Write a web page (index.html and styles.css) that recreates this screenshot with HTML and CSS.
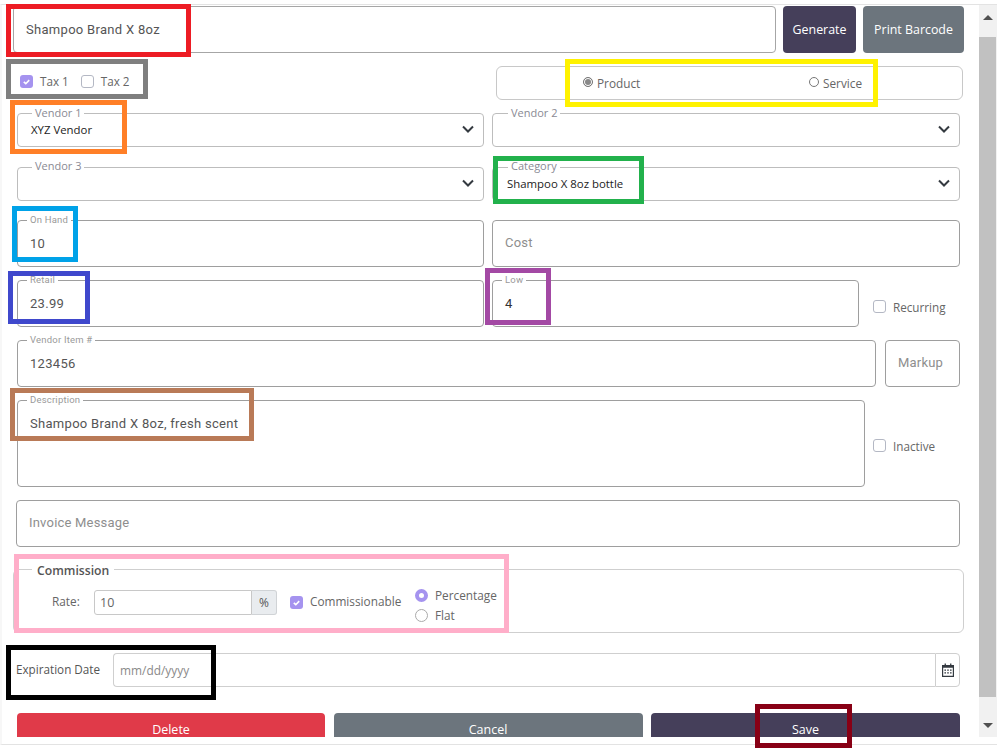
FILE: index.html
```html
<!DOCTYPE html>
<html lang="en">
<head>
<meta charset="utf-8">
<title>Product</title>
<link rel="stylesheet" href="styles.css">
</head>
<body>
<div class="frame">
  <main class="form">
    <div class="row row-name">
      <div class="field name-field"><span class="value roboto">Shampoo Brand X 8oz</span></div>
      <button class="btn btn-dark gen">Generate</button>
      <button class="btn btn-gray print">Print Barcode</button>
    </div>

    <div class="row row-type">
      <div class="taxes">
        <span class="check on"><svg viewBox="0 0 13 13"><path d="M3.8 6.8l2 1.9 3.4-3.6" fill="none" stroke="#fff" stroke-width="1.6"/></svg></span><span class="chk-label">Tax 1</span>
        <span class="check tax2"></span><span class="chk-label">Tax 2</span>
      </div>
      <div class="type-box">
        <span class="item product"><span class="dot sel"></span>Product</span>
        <span class="item service"><span class="dot"></span>Service</span>
      </div>
    </div>

    <div class="row row-select g13">
      <div class="field sel-field half"><label class="sel-label">Vendor 1</label><span class="sel-value">XYZ Vendor</span><svg class="chev" viewBox="0 0 12 8"><path d="M1 1.5l5 5 5-5" fill="none" stroke="#343a40" stroke-width="2"/></svg></div>
      <div class="field sel-field half"><label class="sel-label">Vendor 2</label><svg class="chev" viewBox="0 0 12 8"><path d="M1 1.5l5 5 5-5" fill="none" stroke="#343a40" stroke-width="2"/></svg></div>
    </div>

    <div class="row row-select g20">
      <div class="field sel-field half"><label class="sel-label">Vendor 3</label><svg class="chev" viewBox="0 0 12 8"><path d="M1 1.5l5 5 5-5" fill="none" stroke="#343a40" stroke-width="2"/></svg></div>
      <div class="field sel-field half"><label class="sel-label">Category</label><span class="sel-value">Shampoo X 8oz bottle</span><svg class="chev" viewBox="0 0 12 8"><path d="M1 1.5l5 5 5-5" fill="none" stroke="#343a40" stroke-width="2"/></svg></div>
    </div>

    <div class="row row-input g19">
      <div class="field half"><label class="mini">On Hand</label><span class="value roboto">10</span></div>
      <div class="field half"><span class="ph roboto">Cost</span></div>
    </div>

    <div class="row row-input g13">
      <div class="field half"><label class="mini">Retail</label><span class="value roboto">23.99</span></div>
      <div class="field low"><label class="mini">Low</label><span class="value roboto dark">4</span></div>
      <div class="side-check"><span class="check"></span><span class="chk-label">Recurring</span></div>
    </div>

    <div class="row row-input g13">
      <div class="field vendor-item"><label class="mini">Vendor Item #</label><span class="value roboto">123456</span></div>
      <div class="field markup"><span class="ph roboto">Markup</span></div>
    </div>

    <div class="row row-desc g13">
      <div class="field desc"><label class="mini">Description</label><span class="value roboto">Shampoo Brand X 8oz, fresh scent</span></div>
      <div class="side-check"><span class="check"></span><span class="chk-label">Inactive</span></div>
    </div>

    <div class="row row-input g13 invoice-row">
      <div class="field invoice"><span class="ph roboto">Invoice Message</span></div>
    </div>

    <section class="commission">
      <h3 class="legend">Commission</h3>
      <span class="rate-label">Rate:</span>
      <div class="rate-group"><span class="rate-input">10</span><span class="rate-addon">%</span></div>
      <span class="check on comm-check"><svg viewBox="0 0 13 13"><path d="M3.8 6.8l2 1.9 3.4-3.6" fill="none" stroke="#fff" stroke-width="1.6"/></svg></span><span class="comm-label">Commissionable</span>
      <div class="radios">
        <div class="radio-line"><span class="big-radio on"></span>Percentage</div>
        <div class="radio-line"><span class="big-radio"></span>Flat</div>
      </div>
    </section>

    <div class="row date-row">
      <span class="date-label">Expiration Date</span>
      <div class="date-input"><span class="date-ph">mm/dd/yyyy</span></div>
      <div class="date-addon"><svg viewBox="0 0 12 14" width="12" height="14"><path d="M.6 2.5h10.8v10.9H.6z" fill="none" stroke="#343a40" stroke-width="1.2"/><path d="M.6 2.2h10.8v2.6H.6zM2.6.4h1.3v2.4H2.6zM8.1.4h1.3v2.4H8.1z" fill="#343a40"/><path d="M2.4 6.4h1.6v1.4H2.4zM5.2 6.4h1.6v1.4H5.2zM8 6.4h1.6v1.4H8zM2.4 9.2h1.6v1.4H2.4zM5.2 9.2h1.6v1.4H5.2zM8 9.2h1.6v1.4H8z" fill="#343a40"/></svg></div>
    </div>

    <div class="row actions">
      <button class="act act-red">Delete</button>
      <button class="act act-gray">Cancel</button>
      <button class="act act-dark">Save</button>
    </div>
  </main>

  <aside class="scrollbar">
    <span class="arrow up"></span>
    <span class="thumb"></span>
    <span class="arrow down"></span>
  </aside>
</div>

<div class="mark m-red"></div>
<div class="mark m-gray"></div>
<div class="mark m-orange"></div>
<div class="mark m-yellow"></div>
<div class="mark m-green"></div>
<div class="mark m-cyan"></div>
<div class="mark m-blue"></div>
<div class="mark m-purple"></div>
<div class="mark m-brown"></div>
<div class="mark m-pink"></div>
<div class="mark m-black"></div>
<div class="mark m-maroon"></div>
</body>
</html>
```
FILE: styles.css
```css
* { box-sizing: border-box; }
html, body { margin: 0; height: 750px; overflow: hidden; background: #fff; }
body { font-family: "Open Sans", "Liberation Sans", sans-serif; color: #555; position: relative; }

.frame {
  margin-top: 4px;
  height: 741px;
  display: flex;
  border-top: 1px solid #e3e3e3;
  border-bottom: 1px solid #e3e3e3;
  border-left: 2px solid #f7f7f7;
}
.form { width: 977px; height: 732px; overflow: hidden; padding: 1px 19px 0 15px; }
.row { display: flex; }
.roboto { font-family: Roboto, "Liberation Sans", sans-serif; }

.field {
  position: relative;
  border: 1px solid #9e9e9e;
  border-radius: 4px;
  background: #fff;
  flex: none;
}
.half { width: 467px; }
.half + .half { margin-left: 8px; width: 468px; }

.row-name { height: 47px; margin-left: -4px; margin-right: -4px; }
.name-field { width: 763px; border-color: #a6a6a6; }
.value { position: absolute; left: 12px; top: 15px; font-size: 13px; line-height: 16px; color: #555; letter-spacing: .3px; white-space: nowrap; }
.value.dark { color: #333; }
.ph { position: absolute; left: 12px; top: 13px; font-size: 13px; line-height: 18px; color: #8e8e8e; letter-spacing: .2px; }

.btn { border: 0; border-radius: 4px; color: #fff; font: 12.4px/18px "Open Sans", sans-serif; padding: 0; height: 47px; }
.btn-dark { background: #453f5a; }
.btn-gray { background: #6c757d; }
.gen { width: 73px; margin-left: 7px; }
.print { width: 101px; margin-left: 7px; }

.row-type { height: 34px; margin-top: 13px; margin-right: -3px; justify-content: space-between; }
.taxes { display: flex; align-items: center; padding-left: 3px; height: 30px; }
.check {
  display: inline-block;
  width: 13px; height: 13px;
  border: 1px solid #b4b8c4;
  border-radius: 3px;
  background: #fff;
  flex: none;
}
.check svg { display: block; width: 13px; height: 13px; }
.check.on { background: #a593ef; border: 0; }
.tax2 { margin-left: 12px; }
.chk-label { margin-left: 7px; font-size: 11.7px; line-height: 16px; color: #666; }
.type-box {
  position: relative;
  width: 467px; height: 34px;
  border: 1px solid #c8c8c8;
  border-radius: 6px;
}
.item { position: absolute; top: 7px; display: flex; align-items: center; font-size: 11.8px; line-height: 18px; color: #666; }
.product { left: 86px; }
.service { left: 312px; }
.dot { width: 10px; height: 10px; border: 1px solid #777; border-radius: 50%; margin-right: 4px; background: #fff; position: relative; top: -1px; }
.dot.sel { background: #888; box-shadow: inset 0 0 0 1px #fff; }

.row-select { height: 34px; }
.g13 { margin-top: 13px; }
.g19 { margin-top: 19px; }
.g20 { margin-top: 20px; }
.sel-field { border-color: #bdbdbd; }
.sel-label {
  position: absolute; left: 14px; top: -8px;
  background: #fff; padding: 0 3px;
  font-size: 11px; line-height: 13px; color: #8a8a94;
}
.g20 .sel-label { top: -9px; }
.sel-value { position: absolute; left: 13px; top: 8px; font-size: 11.4px; line-height: 16px; color: #222; white-space: nowrap; }
.sel-field + .sel-field .sel-value { left: 14px; }
.sel-field + .sel-field .sel-label { left: 15px; }
.chev { position: absolute; right: 9px; top: 11px; width: 12px; height: 8px; }

.row-input { height: 47px; }
.mini {
  position: absolute; left: 9px; top: -7px;
  background: #fff; padding: 0 3px;
  font-family: Roboto, sans-serif; font-size: 9.5px; line-height: 12px; color: #9a9a9a; letter-spacing: .2px;
}
.low { width: 367px; margin-left: 8px; }
.side-check { display: flex; align-items: center; margin-left: 14px; padding-top: 6px; }
.vendor-item { width: 859px; }
.markup { width: 75px; margin-left: 9px; }
.row-desc { height: 87px; }
.desc { width: 848px; }
.row-desc .side-check { margin-left: 8px; padding-top: 4px; }
.invoice-row { margin-left: -1px; }
.invoice { width: 944px; }

.commission {
  position: relative;
  height: 64px;
  margin-top: 22px;
  margin-left: -4px;
  margin-right: -4px;
  border: 1px solid #cfcfcf;
  border-radius: 6px;
}
.legend {
  position: absolute; left: 18px; top: -7px; margin: 0;
  background: #fff; padding: 0 5px;
  font-size: 12.2px; line-height: 16px; font-weight: 600; color: #555;
}
.rate-label { position: absolute; left: 38px; top: 23px; font-size: 11.8px; line-height: 16px; color: #666; }
.rate-group { position: absolute; left: 80px; top: 20px; display: flex; height: 25px; }
.rate-input {
  width: 158px; border: 1px solid #c8c8c8; border-radius: 3px 0 0 3px;
  padding-left: 5px; font-size: 12.5px; line-height: 24px; color: #666;
}
.rate-addon {
  width: 25px; border: 1px solid #d0d3d6; border-left: 0; border-radius: 0 3px 3px 0;
  background: #e9ecef; text-align: center; font-size: 12px; line-height: 23px; color: #555;
}
.comm-check { position: absolute; left: 276px; top: 26px; }
.comm-label { position: absolute; left: 296px; top: 23px; font-size: 11.8px; line-height: 16px; color: #666; }
.radios { position: absolute; left: 401px; top: 15px; }
.radio-line { display: flex; align-items: center; height: 20px; font-size: 11.8px; color: #666; }
.big-radio { width: 13px; height: 13px; border-radius: 50%; border: 1px solid #aaa; margin-right: 7px; background: #fff; }
.big-radio.on { background: #fff; border: 4px solid #a593ef; }

.date-row { height: 34px; margin-top: 20px; margin-left: -1px; align-items: center; }
.date-label { width: 97px; font-size: 11.7px; line-height: 16px; color: #555; padding-bottom: 2px; height: 18px; }
.date-input { width: 822px; height: 34px; border: 1px solid #cfcfcf; border-right: 0; border-radius: 4px 0 0 4px; padding-left: 6px; }
.date-ph { font-size: 11.9px; line-height: 32px; color: #8a8a8a; }
.date-addon { width: 25px; height: 34px; border: 1px solid #cfcfcf; border-radius: 0 4px 4px 0; display: flex; align-items: center; justify-content: center; }

.actions { margin-top: 26px; height: 34px; justify-content: space-between; }
.act { width: 309px; height: 34px; border: 0; border-radius: 4px 4px 0 0; color: #fff; font: 12.5px/16px "Open Sans", sans-serif; padding: 0; }
.act-red { background: #e03a49; width: 308px; }
.act-gray { background: #6c757d; }
.act-dark { background: #453f5a; }

.scrollbar { position: relative; width: 18px; height: 732px; background: #f1f1f1; }
.thumb { position: absolute; left: 0; right: 1px; top: 32px; height: 660px; background: #c1c1c1; }
.arrow { position: absolute; left: 4px; width: 0; height: 0; border-left: 5px solid transparent; border-right: 5px solid transparent; }
.up { top: 10px; border-bottom: 5px solid #505050; }
.down { top: 718px; border-top: 5px solid #505050; }

.mark { position: absolute; border: 5px solid; pointer-events: none; }
.m-red { left: 6px; top: 4px; width: 185px; height: 53px; border-color: #ed1c24; }
.m-gray { left: 6px; top: 59px; width: 142px; height: 40px; border-color: #7f7f7f; }
.m-orange { left: 10px; top: 100px; width: 117px; height: 54px; border-color: #ff7f27; }
.m-yellow { left: 565px; top: 59px; width: 313px; height: 48px; border-color: #fff200; }
.m-green { left: 493px; top: 156px; width: 151px; height: 48px; border-color: #22b14c; }
.m-cyan { left: 12px; top: 206px; width: 66px; height: 56px; border-color: #00a2e8; }
.m-blue { left: 8px; top: 271px; width: 82px; height: 53px; border-color: #3f48cc; }
.m-purple { left: 485px; top: 268px; width: 66px; height: 57px; border-color: #a349a4; }
.m-brown { left: 10px; top: 388px; width: 244px; height: 53px; border-color: #b97a57; }
.m-pink { left: 14px; top: 554px; width: 495px; height: 79px; border-color: #ffaec9; }
.m-black { left: 6px; top: 645px; width: 210px; height: 55px; border-color: #000; }
.m-maroon { left: 755px; top: 704px; width: 97px; height: 44px; border-color: #880015; }
```
